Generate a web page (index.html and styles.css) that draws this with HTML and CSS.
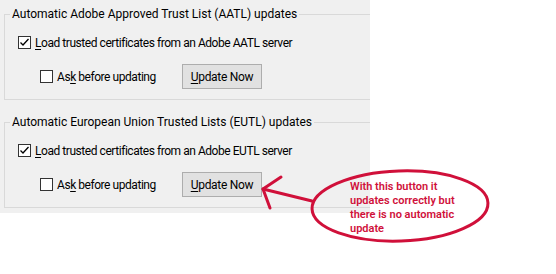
FILE: index.html
```html
<!DOCTYPE html>
<html lang="en">
<head>
  <meta charset="UTF-8" />
  <title>Trust list updates</title>
  <link rel="stylesheet" href="styles.css">
</head>
<body>
  <div class="page">
    <div class="panel">
      <fieldset class="group">
        <legend>Automatic Adobe Approved Trust List (AATL) updates</legend>
        <div class="row row-main">
          <span class="check checked"><svg viewBox="0 0 11 11" width="11" height="11"><path d="M1.5 5.5 L4 8 L9.5 2" /></svg></span>
          <span class="label"><u>L</u>oad trusted certificates from an Adobe AATL server</span>
        </div>
        <div class="row row-sub">
          <span class="check"></span>
          <span class="label ask">As<u>k</u> before updating</span>
          <button class="btn" type="button"><u>U</u>pdate Now</button>
        </div>
      </fieldset>

      <fieldset class="group">
        <legend>Automatic European Union Trusted Lists (EUTL) updates</legend>
        <div class="row row-main">
          <span class="check checked"><svg viewBox="0 0 11 11" width="11" height="11"><path d="M1.5 5.5 L4 8 L9.5 2" /></svg></span>
          <span class="label"><u>L</u>oad trusted certificates from an Adobe EUTL server</span>
        </div>
        <div class="row row-sub">
          <span class="check"></span>
          <span class="label ask">As<u>k</u> before updating</span>
          <button class="btn" type="button"><u>U</u>pdate Now</button>
        </div>
      </fieldset>
    </div>

    <!-- red annotation drawn over the screenshot -->
    <svg class="annot" width="556" height="274" viewBox="0 0 556 274">
      <ellipse cx="400" cy="206" rx="88" ry="35" transform="rotate(-2 400 206)" />
      <path d="M312 201 L263 189" />
      <path d="M281 177 L263 189 L270 208" />
    </svg>
    <div class="note">With this button it<br>updates correctly but<br>there is no automatic<br>update</div>
  </div>
</body>
</html>
```

FILE: styles.css
```css
* {
  box-sizing: border-box;
}
body {
  margin: 0;
  background: #fff;
  font-family: Roboto, 'Noto Sans', sans-serif;
  font-size: 12px;
  color: #000;
}
.page {
  position: relative;
  width: 556px;
  height: 274px;
}
.panel {
  width: 370px;
  height: 213px;
  background: #f0f0f0;
  padding: 7px 0 0 4px;
}
.group {
  margin: 0 0 13px 0;
  padding: 0 0 10px 13px;
  border: 1px solid #d9d9d9;
  border-right: none;
  min-width: 0;
}
.group + .group {
  margin-top: 15px;
}
.group legend {
  margin-left: -8px;
  padding: 0 2px;
  line-height: 14px;
  height: 14px;
}
.row {
  display: flex;
  align-items: center;
}
.row-main {
  height: 17px;
  margin-top: 13px;
}
.row-sub {
  margin-top: 13px;
  padding-left: 22px;
}
.check {
  width: 13px;
  height: 13px;
  flex: 0 0 13px;
  background: #fff;
  border: 1px solid #333;
  display: flex;
  align-items: center;
  justify-content: center;
}
.check svg path {
  fill: none;
  stroke: #000;
  stroke-width: 1.3;
}
.label {
  margin-left: 4px;
  line-height: 16px;
  letter-spacing: -0.45px;
  white-space: nowrap;
}
.label u,
.btn u {
  text-underline-offset: 2px;
}
.ask {
  width: 125px;
  flex: 0 0 125px;
}
.btn {
  width: 80px;
  height: 25px;
  margin-left: 0;
  padding: 0;
  background: #e1e1e1;
  border: 1px solid #adadad;
  border-radius: 0;
  font: inherit;
  letter-spacing: -0.3px;
  color: #000;
}
.annot {
  position: absolute;
  left: 0;
  top: 0;
  pointer-events: none;
}
.annot ellipse,
.annot path {
  fill: none;
  stroke: #d0103a;
  stroke-width: 3;
  stroke-linecap: round;
  stroke-linejoin: round;
}
.note {
  position: absolute;
  left: 350px;
  top: 180px;
  color: #d0103a;
  font-size: 11px;
  font-weight: 600;
  line-height: 14px;
  white-space: nowrap;
}
```
